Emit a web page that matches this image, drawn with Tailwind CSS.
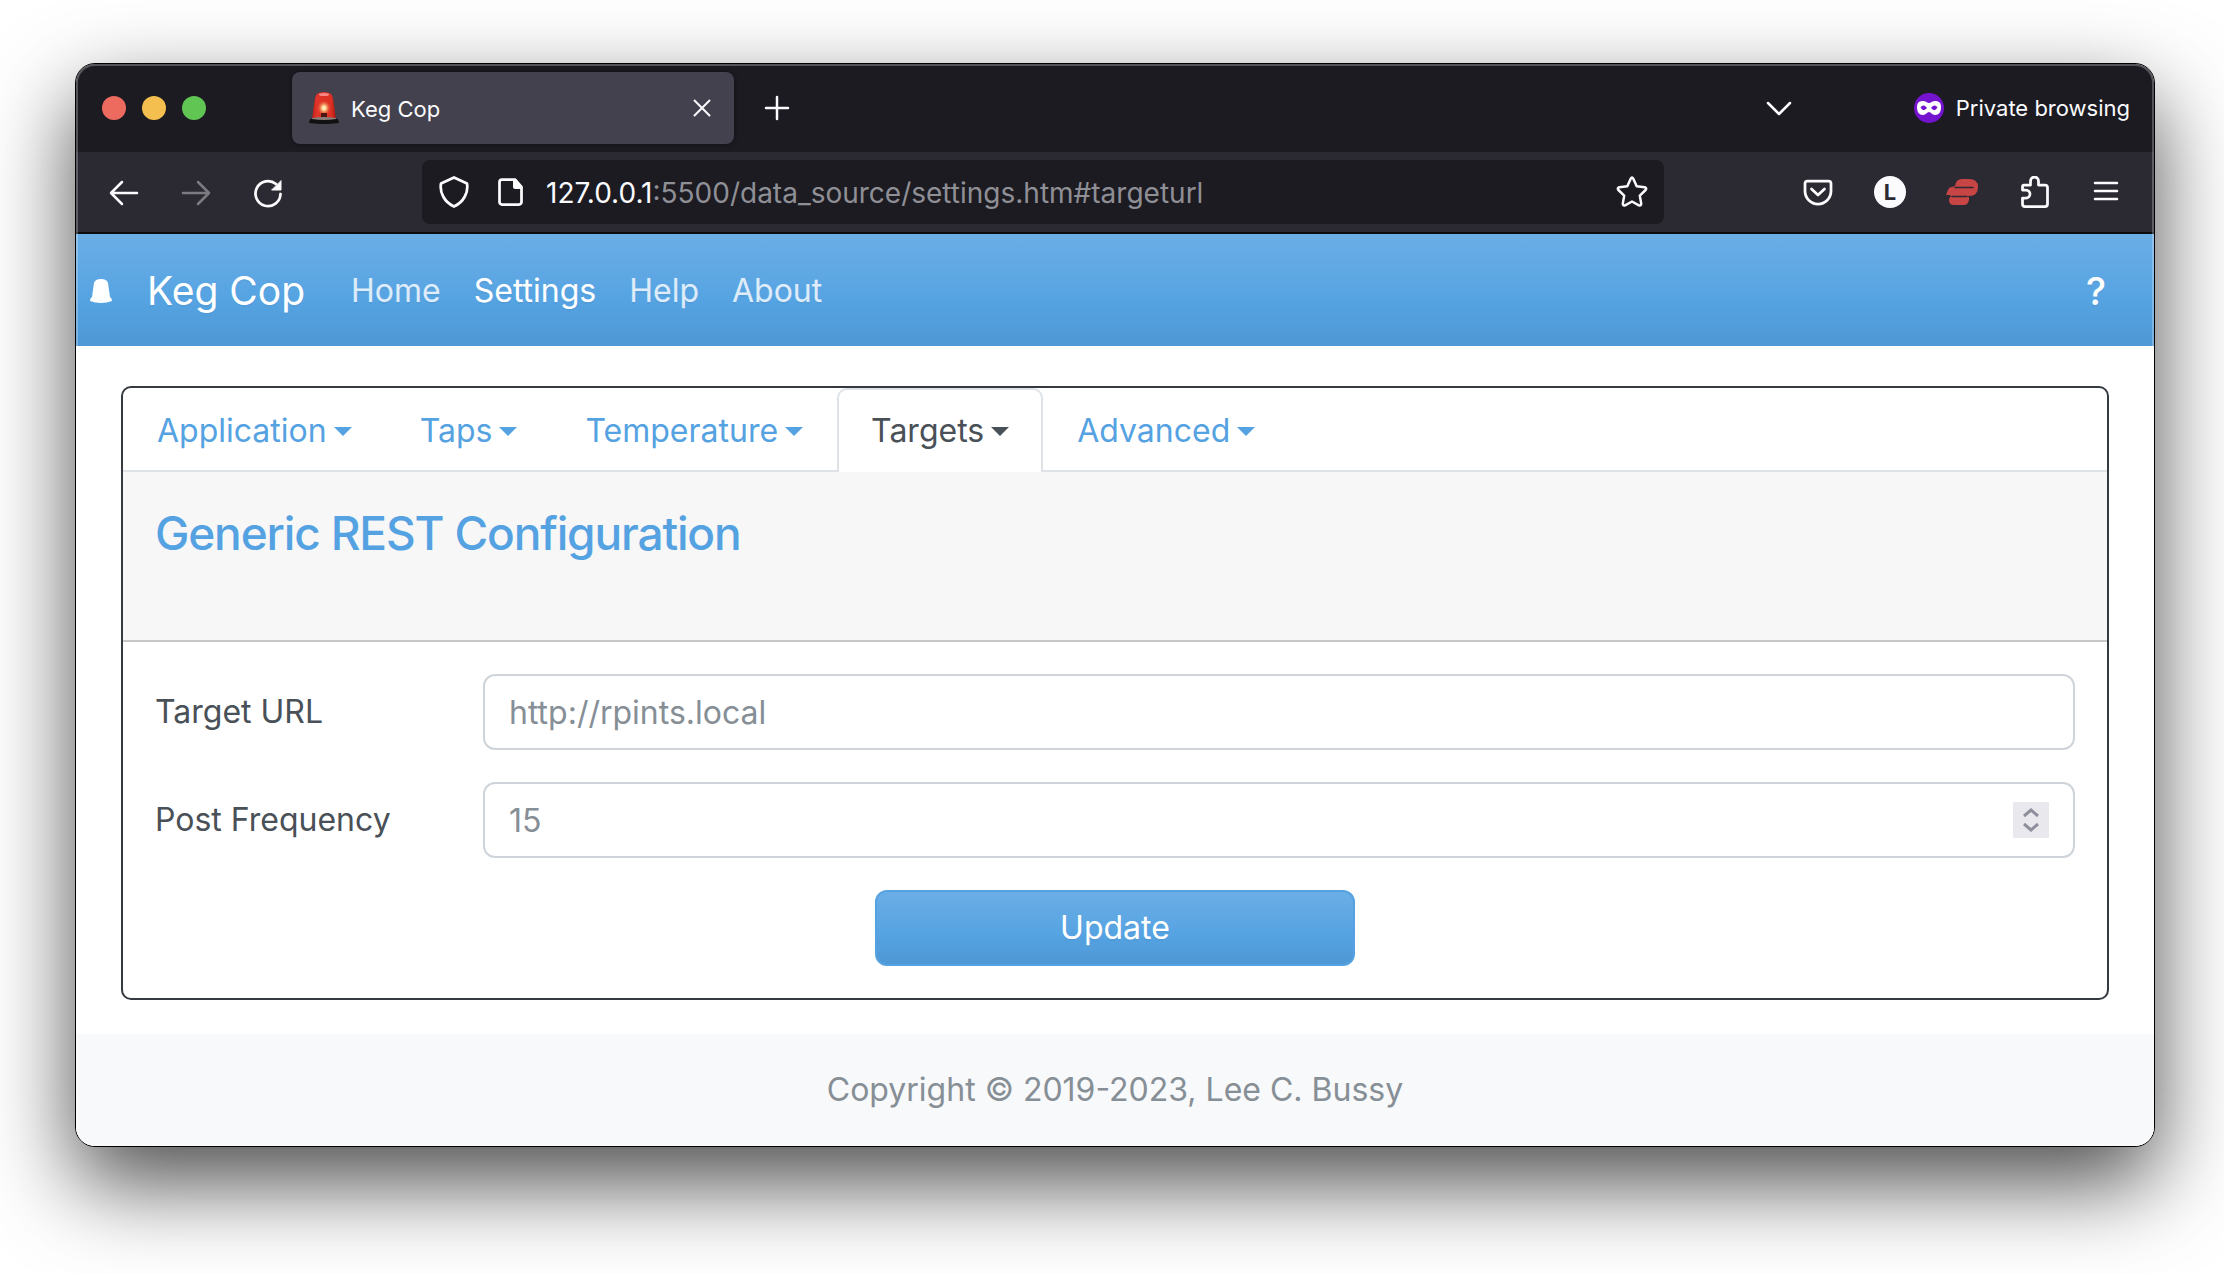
<!DOCTYPE html>
<html lang="en">
<head>
<meta charset="utf-8">
<title>Keg Cop</title>
<script src="https://cdn.jsdelivr.net/npm/@tailwindcss/browser@4"></script>
</head>
<body class="min-h-screen bg-white font-['Inter',sans-serif] text-[32px] text-[#495057] pt-[63px] pl-[75px] pr-[69px]">
<div class="relative overflow-hidden rounded-[20px] border border-black bg-white shadow-[0_36px_88px_rgba(0,0,0,0.7)]">

  <!-- Tab strip -->
  <header class="bg-[#1c1b22] text-[22px] text-[#fbfbfe]">
    <div class="flex h-[88px] items-center pl-[26px] pr-6">
      <div class="flex gap-4">
        <button aria-label="Close window" class="size-6 rounded-full bg-[#ed6a5e]"></button>
        <button aria-label="Minimize window" class="size-6 rounded-full bg-[#f5bf4f]"></button>
        <button aria-label="Zoom window" class="size-6 rounded-full bg-[#61c554]"></button>
      </div>
      <div class="ml-[86px] flex h-[72px] w-[442px] items-center rounded-lg bg-[#42414d] pl-4 pr-[22px] shadow-[0_0_4px_rgba(0,0,0,0.5)]">
        <svg class="mr-[11px] size-8" viewBox="0 0 32 32" aria-hidden="true">
          <defs>
            <linearGradient id="dome" x1="0" x2="1"><stop offset="0" stop-color="#b81f16"/><stop offset=".2" stop-color="#e2352a"/><stop offset=".8" stop-color="#dc3023"/><stop offset="1" stop-color="#a81810"/></linearGradient>
            <radialGradient id="lamp"><stop offset="0" stop-color="#fffbe0"/><stop offset=".3" stop-color="#fbd08a"/><stop offset="1" stop-color="#e8402f" stop-opacity="0"/></radialGradient>
          </defs>
          <path d="M4 27 7 6Q8 0 16 0t9 6l3 21z" fill="url(#dome)"/>
          <ellipse cx="16" cy="2.500" rx="5" ry="1.500" fill="#f58a84"/>
          <ellipse cx="16" cy="16" rx="7" ry="8" fill="url(#lamp)"/>
          <path d="M13 21h6v5h-6z" fill="#4a1710"/>
          <path d="M2 27q14-3 28 0l1 4q-15 2-30 0z" fill="#111"/>
          <path d="M4 26q12-2 24 0v1q-12 2-24 0z" fill="#8b7d7a"/>
        </svg>
        <span class="grow pt-0.5">Keg Cop</span>
        <button aria-label="Close tab"><svg class="size-5" viewBox="0 0 20 20" fill="none" stroke="currentColor" stroke-width="2" stroke-linecap="round"><path d="M2.500 2.500l15 15M17.500 2.500l-15 15"/></svg></button>
      </div>
      <button aria-label="New tab" class="ml-[30px]"><svg class="size-[26px]" viewBox="0 0 26 26" fill="none" stroke="currentColor" stroke-width="2.500" stroke-linecap="round"><path d="M13 2v22M2 13h22"/></svg></button>
      <button aria-label="List all tabs" class="ml-auto mr-[122px]"><svg class="h-4 w-[26px]" viewBox="0 0 26 16" fill="none" stroke="currentColor" stroke-width="2.500" stroke-linecap="round" stroke-linejoin="round"><path d="M2 3l11 11L24 3"/></svg></button>
      <svg class="mr-3 size-[30px]" viewBox="0 0 30 30" aria-hidden="true"><circle cx="15" cy="15" r="15" fill="#7414cf"/><path fill="#fff" fill-rule="evenodd" d="M9 8c3 0 4 2 6 2s3-2 6-2c4 0 6 2 6 6 0 5-2 8-6 8-3 0-4-3-6-3s-3 3-6 3c-4 0-6-3-6-8 0-4 2-6 6-6zM6.500 14.500q3 5 6.500.5-3.500-4.500-6.500-.5zm10.500.5q3.500 4.500 6.500-.5-3-4-6.500.5z"/></svg>
      <span>Private browsing</span>
    </div>

    <!-- Navigation toolbar -->
    <div class="flex h-[82px] items-center border-b-2 border-[#0c0c0d] bg-[#2b2a33] px-8">
      <button aria-label="Back" class="mr-10"><svg class="size-8" viewBox="0 0 32 32" fill="none" stroke="currentColor" stroke-width="2.500" stroke-linecap="round" stroke-linejoin="round"><path d="M29 17H3M14 6 3 17l11 11"/></svg></button>
      <button aria-label="Forward" class="mr-10 text-[#7c7b82]"><svg class="size-8" viewBox="0 0 32 32" fill="none" stroke="currentColor" stroke-width="2.500" stroke-linecap="round" stroke-linejoin="round"><path d="M3 17h26M18 6l11 11-11 11"/></svg></button>
      <button aria-label="Reload"><svg class="size-8" viewBox="0 0 32 32" fill="none" stroke="currentColor" stroke-width="2.750" stroke-linecap="round"><path d="M28.500 18A12.500 12.500 0 1 1 24 8"/><path d="M29 5v9h-9z" fill="currentColor" stroke-width="1" stroke-linejoin="round"/></svg></button>
      <div class="ml-[138px] mr-[138px] flex h-16 grow items-center rounded-lg bg-[#1c1b22] px-4">
        <svg class="mr-6 size-8" viewBox="0 0 32 32" fill="none" stroke="currentColor" stroke-width="2.750" stroke-linejoin="round" aria-hidden="true"><path d="M16 1.500 29 7.500C30.500 16 26 26 16 30.500 6 26 1.500 16 3 7.500z"/></svg>
        <svg class="mr-5 size-8" viewBox="0 0 32 32" aria-hidden="true"><path d="M21 3.500H8a2.500 2.500 0 0 0-2.500 2.500v20A2.500 2.500 0 0 0 8 28.500h17a2.500 2.500 0 0 0 2.500-2.500V11z" fill="none" stroke="currentColor" stroke-width="2.750"/><path d="M19 3h3l6 7v3h-7a2 2 0 0 1-2-2z" fill="currentColor"/></svg>
        <div role="textbox" aria-label="Address" contenteditable="true" class="grow pt-0.5 text-[28px] text-[#8f8f96]"><span class="text-[#fbfbfe]">127.0.0.1</span>:5500/data_source/settings.htm#targeturl</div>
        <button aria-label="Bookmark this page"><svg class="size-8" viewBox="0 0 32 32" fill="none" stroke="currentColor" stroke-width="2.500" stroke-linejoin="round"><path d="M14.700 2.700q1.300-2.200 2.600 0l3.400 7.500 8 1.100q2.500.7.900 2.700l-5.800 5.600 1.400 8q0 2.600-2.300 1.700L16 25.500l-6.900 3.800q-2.300.9-2.300-1.700l1.400-8L2.400 14q-1.600-2 .9-2.700l8-1.100z"/></svg></button>
      </div>
      <div class="flex items-center gap-10">
        <button aria-label="Save to Pocket"><svg class="size-8" viewBox="0 0 32 32" fill="none" stroke="currentColor" stroke-width="2.750" stroke-linecap="round" stroke-linejoin="round"><path d="M5.500 5h21Q29 5 29 7.500V15a13 13 0 0 1-26 0V7.500Q3 5 5.500 5z"/><path d="m9.500 13 6.500 6 6.500-6"/></svg></button>
        <button aria-label="Account" class="size-8 rounded-full bg-[#fbfbfe] text-[22px] leading-8 font-bold text-[#2b2a33]">L</button>
        <button aria-label="Extension"><svg class="size-8" viewBox="0 0 32 32" fill="#c74545"><path d="M9 10q1-7 7-7h7q9 0 9 8 0 9-9 9h-1q1.500 2 1 4-1 5-5 5H8q-5 0-5-5 0-2 2-4l-1-1H0l2-5q1-3 4-3z"/><path d="M9 11.500h18M6 20.500h15" fill="none" stroke="#2b2a33" stroke-width="1.500" stroke-linecap="round"/></svg></button>
        <button aria-label="Extensions"><svg class="size-8" viewBox="0 0 32 32" fill="none" stroke="currentColor" stroke-width="2.750" stroke-linejoin="round"><path d="M6 9h6.500V5a4 4 0 0 1 8 0v4H27q2.500 0 2.500 2.500v16.500q0 2.500-2.500 2.500H7q-2.500 0-2.500-2.500v-6H8a4 4 0 0 0 0-8H4.500V11Q4.500 9 6 9z"/></svg></button>
        <button aria-label="Application menu"><svg class="size-8" viewBox="0 0 32 32" fill="none" stroke="currentColor" stroke-width="2.500" stroke-linecap="round"><path d="M5 7h22M5 15h22M5 23h22"/></svg></button>
      </div>
    </div>
  </header>

  <!-- Site navbar -->
  <nav class="flex h-28 items-center bg-linear-to-b from-[#6baee6] via-[#55a3e2] via-60% to-[#4f97d5] pt-0.5 pl-[13px] pr-12 text-white/80 [text-shadow:0_2px_0_rgba(0,0,0,0.05)]">
    <svg class="mr-[34px] size-6 text-white" viewBox="0 0 24 24" aria-hidden="true"><path d="M5 4q1-4 7-4t7 4l2 14q2 1 2 4-5 2-11 2T1 22q0-3 2-4z" fill="currentColor"/></svg>
    <a href="#" class="mr-[46px] text-[39px] text-white">Keg Cop</a>
    <div class="flex gap-[33px]">
      <a href="#">Home</a>
      <a href="#" class="text-white">Settings</a>
      <a href="#">Help</a>
      <a href="#">About</a>
    </div>
    <a href="#" aria-label="Help" class="ml-auto text-[38px] font-medium text-white">?</a>
  </nav>

  <main class="px-[45px] pt-10 pb-[34px]">
    <section class="rounded-[10px] border-2 border-[#343a40]">
      <div class="flex h-[84px] border-b-2 border-[#dee2e6] text-[#55a2e2] [text-shadow:0_2px_0_rgba(0,0,0,0.05)]">
        <button class="flex items-center gap-[7px] px-[34px] pt-1">Application<span class="border-x-9 border-t-9 border-x-transparent border-t-current"></span></button>
        <button class="flex items-center gap-[7px] px-[34px] pt-1">Taps<span class="border-x-9 border-t-9 border-x-transparent border-t-current"></span></button>
        <button class="flex items-center gap-[7px] px-[34px] pt-1">Temperature<span class="border-x-9 border-t-9 border-x-transparent border-t-current"></span></button>
        <button class="-mb-0.5 flex items-center gap-[7px] rounded-t-[10px] border-2 border-b-0 border-[#dee2e6] bg-white px-8 text-[#495057]">Targets<span class="border-x-9 border-t-9 border-x-transparent border-t-current"></span></button>
        <button class="flex items-center gap-[7px] px-[34px] pt-1">Advanced<span class="border-x-9 border-t-9 border-x-transparent border-t-current"></span></button>
      </div>
      <div class="h-[170px] border-b-2 border-[#c6c8ca] bg-[#f7f7f7] px-8 pt-8">
        <h1 class="text-[46px] leading-[58px] font-medium tracking-tight text-[#55a2e2]">Generic REST Configuration</h1>
      </div>
      <form class="grid grid-cols-[296px_1fr] items-center gap-x-8 gap-y-8 p-8">
        <label for="url">Target URL</label>
        <input id="url" type="text" placeholder="http://rpints.local" class="h-[76px] w-full rounded-[12px] border-2 border-[#ced4da] px-6 placeholder:text-[#868e96]">
        <label for="freq">Post Frequency</label>
        <div class="relative">
          <input id="freq" type="number" placeholder="15" class="h-[76px] w-full rounded-[12px] border-2 border-[#ced4da] px-6 [appearance:textfield] placeholder:text-[#868e96]">
          <div class="absolute top-5 right-[26px] flex h-9 w-9 flex-col items-center justify-center gap-1 bg-[#e9e9ed] text-[#8f8f9d]">
            <button type="button" aria-label="Increase"><svg class="h-3 w-4" viewBox="0 0 16 12" fill="none" stroke="currentColor" stroke-width="3"><path d="m1 10 7-6 7 6"/></svg></button>
            <button type="button" aria-label="Decrease"><svg class="h-3 w-4" viewBox="0 0 16 12" fill="none" stroke="currentColor" stroke-width="3"><path d="m1 2 7 6 7-6"/></svg></button>
          </div>
        </div>
        <button type="submit" class="col-span-2 h-[76px] w-[480px] justify-self-center rounded-[12px] border-2 border-[#55a2e2] bg-linear-to-b from-[#6baee6] via-[#55a3e2] via-60% to-[#4f97d5] text-white [text-shadow:0_2px_0_rgba(0,0,0,0.05)]">Update</button>
      </form>
    </section>
  </main>

  <footer class="flex h-28 items-center justify-center bg-[#f8f9fa] text-[#868e96]">Copyright © 2019-2023, Lee C. Bussy</footer>
  <div class="pointer-events-none absolute inset-0 rounded-[19px] shadow-[inset_0_0_0_2px_rgba(255,255,255,0.25)]"></div>
</div>
</body>
</html>
